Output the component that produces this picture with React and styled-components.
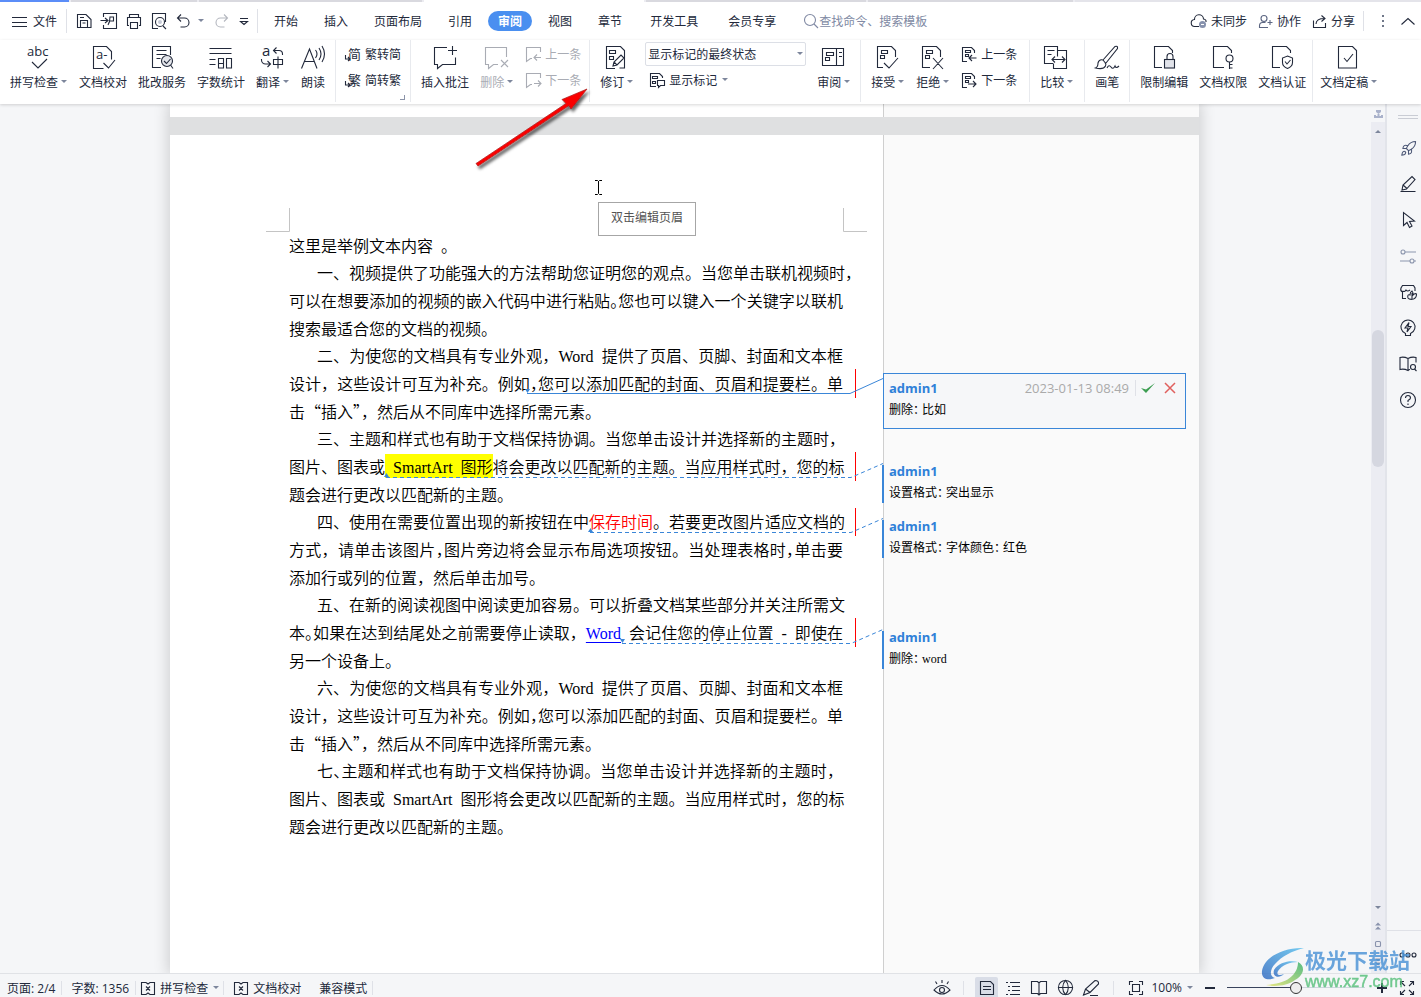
import { useState } from "react";
import styled, { createGlobalStyle } from "styled-components";
import { Globe, Rocket } from "lucide-react";

const GlobalStyle = createGlobalStyle`
  html, body, #root {
    height: 100%;
    margin: 0;
  }
  body {
    overflow: hidden;
    background: #f5f6f8;
    color: #22293b;
    font-family: "Open Sans", "Noto Sans CJK SC", sans-serif;
    font-size: 12px;
  }
  * {
    box-sizing: border-box;
  }
  svg {
    display: block;
    flex: none;
    overflow: visible;
  }
  button, select, input {
    font: inherit;
    color: inherit;
  }
  button {
    padding: 0;
    border: 0;
    background: none;
    white-space: nowrap;
    cursor: pointer;
  }
`;

/* ---------- layout ---------- */

const AppShell = styled.div`
  position: relative;
  display: flex;
  flex-direction: column;
  height: 100vh;
`;

const TabStrip = styled.div`
  display: flex;
  flex: none;
  gap: 2px;
  height: 2px;
  background: #ececf1;
`;

const StripTab = styled.div`
  flex: ${(p) => p.$flex} 1 0;
  background: ${(p) => p.$color};
`;

const MenuBar = styled.header`
  display: flex;
  align-items: center;
  flex: none;
  height: 38px;
  padding: 0 6px 0 12px;
  background: #fff;
`;

const FileButton = styled.button`
  display: flex;
  align-items: center;
  gap: 6px;
`;

const Separator = styled.i`
  width: 1px;
  height: ${(p) => p.$height || 24}px;
  margin: 0 ${(p) => p.$right || 8}px 0 ${(p) => p.$left || 8}px;
  background: #dfe1e7;
`;

const Spacer = styled.i`
  width: ${(p) => p.$width}px;
`;

const QuickTools = styled.div`
  display: flex;
  align-items: center;
  gap: 7px;
`;

const IconButton = styled.button`
  display: flex;
  align-items: center;
  gap: 4px;
  color: ${(p) => (p.$muted ? "#b4b7bf" : "inherit")};
`;

const Tabs = styled.nav`
  display: flex;
  align-items: center;
`;

const Tab = styled.button`
  height: 20px;
  margin: 0 3px;
  padding: 0 ${(p) => (p.$wide ? 12 : 10)}px;
  border-radius: 10px;
  background: ${(p) => (p.$active ? "#4a8ff0" : "none")};
  color: ${(p) => (p.$active ? "#fff" : "inherit")};
  font-weight: ${(p) => (p.$active ? 700 : 400)};
`;

const SearchLabel = styled.label`
  display: flex;
  align-items: center;
  margin-left: 12px;
  color: #8089a3;
`;

const SearchInput = styled.input`
  width: 130px;
  padding: 0;
  border: 0;
  outline: 0;
  background: none;

  &::placeholder {
    color: #8089a3;
    opacity: 1;
  }
`;

const MenuRight = styled.div`
  display: flex;
  align-items: center;
  gap: 11px;
  margin-left: auto;
`;

const Ribbon = styled.section`
  position: relative;
  z-index: 2;
  display: flex;
  flex: none;
  height: 64px;
  background: #fff;
  box-shadow: 0 1px 3px rgba(0, 0, 0, 0.16);
`;

const Group = styled.div`
  position: relative;
  display: flex;
  flex: none;
  gap: 11px;
  height: 62px;
  padding: 0 ${(p) => p.$right || 10}px 0 ${(p) => p.$left || 10}px;
  border-right: ${(p) => (p.$last ? 0 : 1)}px solid #e8eaee;
`;

const BigButton = styled.button`
  display: flex;
  flex-direction: column;
  align-items: center;
  height: 55px;
  padding-top: 5px;
  color: ${(p) => (p.$muted ? "#a9acb4" : "inherit")};

  > svg {
    margin-right: ${(p) => (p.$drop ? 2 : 0)}px;
  }
`;

const ButtonLabel = styled.span`
  display: flex;
  align-items: center;
  gap: 2px;
  height: 26px;
`;

const SmallStack = styled.div`
  display: flex;
  flex-direction: column;
  gap: 2px;
  padding-top: 2px;
`;

const SmallButton = styled.button`
  display: flex;
  align-items: center;
  gap: 4px;
  height: 24px;
  padding-left: ${(p) => p.$indent || 0}px;
  color: ${(p) => (p.$muted ? "#a9acb4" : "inherit")};
`;

const SelectWrap = styled.label`
  position: relative;
  display: flex;
  align-items: center;
  width: 161px;
  height: 24px;

  svg {
    position: absolute;
    right: 2px;
    pointer-events: none;
  }
`;

const Select = styled.select`
  width: 100%;
  height: 24px;
  padding: 0 2px;
  border: 1px solid #dcdfe6;
  border-radius: 2px;
  outline: 0;
  appearance: none;
  background: #fff;
`;

const Launcher = styled.span`
  position: absolute;
  right: 5px;
  bottom: 2px;
  width: 5px;
  height: 5px;
  border: solid #8b93a8;
  border-width: 0 1px 1px 0;
`;

const Workspace = styled.main`
  display: flex;
  flex: 1;
  min-height: 0;
`;

const Canvas = styled.div`
  display: flex;
  flex: 1;
  flex-direction: column;
  align-items: center;
  overflow: hidden;
  padding-right: 2px;
`;

const Pages = styled.div`
  display: flex;
  flex-direction: column;
  flex: 1 0 auto;
  gap: 18px;
  width: 1029px;
  background: #dfe0e1;
  box-shadow: 0 0 14px 2px rgba(0, 0, 0, 0.16);
`;

const Paper = styled.article`
  position: relative;
  display: flex;
  justify-content: flex-end;
  flex: ${(p) => (p.$tail ? "none" : "1 0 auto")};
  height: ${(p) => (p.$tail ? "13px" : "auto")};
  background: #fff;
`;

const PaperBody = styled.div`
  flex: 1;
  padding: 96px 40px 0 119px;
  color: #000;
  font-family: "Noto Sans CJK SC", sans-serif;
  font-size: 16px;
  font-weight: 350;
  line-height: 28px;
`;

const Margin = styled.aside`
  width: 316px;
  padding-top: ${(p) => (p.$tail ? 0 : 238)}px;
  border-left: 1px solid #cfcfcf;
  background: #fafafa;
`;

const Paragraph = styled.p`
  width: 554px;
  margin: 0 0 -1px;
`;

const Line = styled.span`
  display: block;
  height: 28px;
  margin-right: ${(p) => (p.$hang ? -10 : 0)}px;
  padding-left: ${(p) => (p.$first ? 28 : 0)}px;
  text-align: justify;
  text-align-last: ${(p) => (p.$end ? "left" : "justify")};
  white-space: nowrap;
`;

// half-width punctuation
const Half = styled.span`
  font-feature-settings: "halt";
`;

const Latin = styled.span`
  font-family: "Liberation Serif", serif;
  font-weight: 400;
  line-height: 20px;
`;

const Highlight = styled.mark`
  background: #ff0;
  color: inherit;
`;

const RedText = styled.span`
  color: #f00;
`;

const WordLink = styled.a`
  color: #00f;
  font-family: "Liberation Serif", serif;
  font-weight: 400;
  line-height: 20px;
  text-underline-offset: 3px;
`;

const Markup = styled.svg`
  position: absolute;
  top: 0;
  left: 0;
  pointer-events: none;
`;

const HeaderTip = styled.div`
  position: absolute;
  top: 67px;
  left: 428px;
  width: 98px;
  height: 34px;
  border: 1px solid #a6a6a6;
  background: #fff;
  color: #555;
  line-height: 30px;
  text-align: center;
`;

const Revision = styled.section`
  width: 303px;
  height: ${(p) => (p.$active ? 56 : 38)}px;
  margin: ${(p) => p.$gap}px 0 0 ${(p) => (p.$active ? -1 : -2)}px;
  padding: ${(p) => (p.$active ? "8px 9px 0 5px" : "0 0 0 5px")};
  border: ${(p) => (p.$active ? "1px solid #3a86d8" : "0 solid #3a86d8")};
  border-left-width: ${(p) => (p.$active ? 1 : 2)}px;
  background: ${(p) => (p.$active ? "#f6f7f9" : "none")};
`;

const RevisionHead = styled.div`
  display: flex;
  align-items: center;
  height: 12px;
  margin-bottom: 8px;
`;

const Author = styled.b`
  margin-right: auto;
  color: #2f80d8;
  font-size: 13px;
  line-height: 12px;
`;

const RevisionDate = styled.time`
  color: #aaa;
  font-size: 13px;
  line-height: 12px;
`;

const RevisionText = styled.p`
  margin: 0;
  color: #000;
  font-family: "Liberation Serif", "Noto Sans CJK SC", serif;
  line-height: 16px;
`;

const ScrollTrack = styled.div`
  display: flex;
  flex-direction: column;
  align-items: center;
  flex: none;
  width: 16px;
  border-right: 2px solid #e2e4ea;
  background: #ebecf2;
`;

const SplitHandle = styled.div`
  width: 100%;
  height: 18px;
  padding: 6px 2px 0 3px;
  background: #f5f6f8;
`;

const ScrollSpace = styled.div`
  flex: ${(p) => p.$grow} 1 0;
`;

const ScrollThumb = styled.div`
  width: 12px;
  height: 137px;
  border-radius: 6px;
  background: #d5d7e0;
`;

const ScrollButton = styled.button`
  display: flex;
  align-items: center;
  justify-content: center;
  height: 18px;
`;

const Rail = styled.aside`
  display: flex;
  flex-direction: column;
  align-items: center;
  flex: none;
  gap: 18px;
  width: 34px;
  padding-left: 8px;
`;

const Grip = styled.div`
  width: 20px;
  height: 4px;
  margin: 11px 0 2px;
  border: solid #c9ccd4;
  border-width: 1px 0;
`;

const RailButton = styled.button`
  display: flex;
  align-items: center;
  height: 18px;
`;

const RailMore = styled.button`
  display: flex;
  align-items: center;
  justify-content: center;
  width: 34px;
  height: 43px;
  margin: auto 0 0 -8px;
  padding: 6px 0 0 8px;
  border-top: 1px solid #dfe1e7;
`;

const StatusBar = styled.footer`
  display: flex;
  align-items: center;
  flex: none;
  height: 24px;
  padding: 4px 6px 0 7px;
  border-top: 1px solid #e0e2e6;
  background: #f5f6f8;
  white-space: nowrap;
`;

const ViewTools = styled.div`
  display: flex;
  align-items: center;
  margin-left: auto;
`;

const ViewButton = styled.button`
  display: flex;
  align-items: center;
  justify-content: center;
  width: ${(p) => (p.$active ? 23 : 26)}px;
  height: 22px;
  margin-right: ${(p) => (p.$active ? 2 : 0)}px;
  border-radius: 2px 2px 0 0;
  background: ${(p) => (p.$active ? "#d9dde7" : "none")};
`;

const ZoomSlider = styled.input`
  width: 138px;
  height: 14px;
  margin: 0 11px;
  appearance: none;
  background: linear-gradient(#39435c, #39435c) 0 50% / 69px 1px no-repeat,
    linear-gradient(#cdd6dd, #cdd6dd) 0 50% / 100% 1px no-repeat;

  &::-webkit-slider-thumb {
    width: 12px;
    height: 12px;
    border: 1px solid #333;
    border-radius: 50%;
    appearance: none;
    background: #eee;
  }
`;

const RedArrow = styled.svg`
  position: absolute;
  top: 84px;
  left: 468px;
  z-index: 3;
  pointer-events: none;
`;

const Watermark = styled.div`
  position: absolute;
  right: 10px;
  bottom: 5px;
  z-index: 4;
  display: flex;
  gap: 1px;
  opacity: 0.82;
  pointer-events: none;
`;

const WatermarkText = styled.div`
  display: flex;
  flex-direction: column;
  width: 106px;
  color: #4b93d6;
  font-size: 21px;
  font-weight: 700;
  line-height: 24px;
  white-space: nowrap;
`;

const WatermarkUrl = styled.span`
  color: #54bf78;
  font-family: "Liberation Sans", sans-serif;
  font-size: 16px;
  font-weight: 400;
  line-height: 20px;
  -webkit-text-stroke: 0.5px #54bf78;
`;

/* ---------- icons ---------- */

const Icon = ({ size = 24, w, children, ...rest }) => (
    <svg width={w || size} height={size} viewBox={`0 0 ${w || size} ${size}`} fill="none"
        stroke="currentColor" strokeWidth="1.1" aria-hidden="true" {...rest}>
        {children}
    </svg>
);

const Caret = ({ up }) => (
    <svg width="8" height="4" viewBox="0 0 8 4" aria-hidden="true">
        <path d={up ? "M1 4h6L4 1z" : "M1 0h6L4 3z"} fill="#7d869c" />
    </svg>
);

const CommentShape = ({ d }) => <Icon size={16}><path d={`M7 12.500H5.500l-4 3V1.500h14V6${d}`} /></Icon>;

const icons = {
    spell: <Icon><text x="1" y="11" fontSize="13" stroke="none" fill="currentColor">abc</text><path d="M6 17l6 6 9-9" /></Icon>,
    proof: (
        <Icon>
            <path d="M12.500 23.500h-10v-22h13l5 5v8M12.500 18l5 5 6.500-8" />
            <text x="5" y="14" fontSize="13" stroke="none" fill="currentColor">a-</text>
        </Icon>
    ),
    service: (
        <Icon>
            <path d="M11 22.500H2.500v-21h18V10M6.500 5.500h10M6.500 9.500h10M6.500 13.500h4M20.500 20l2.500 3.500" />
            <circle cx="17" cy="16" r="5.500" fill="#e4e6ec" />
            <path d="M14 16l2.500 2.500 4-4.500" />
        </Icon>
    ),
    count: (
        <Icon>
            <path d="M.5 3.500h22M.5 8.500h22M.5 14.500h6M.5 19.500h6M9.500 13.500h5v9.500h-5zM17.500 13.500h5v9.500h-5zM9.500 18.500h5" />
        </Icon>
    ),
    translate: (
        <Icon>
            <text x="2" y="11" fontSize="15" stroke="none" fill="currentColor">a</text>
            <path d="M14 5.500h5a3.500 3.500 0 0 1 3.500 3.500v1M16.500 2.500l-3 3 3 3M1.500 14v1a4 4 0 0 0 4 4H10M7.500 16l3 3-3 3M13.500 14.500h9v5h-9zM18 11.500v12" />
        </Icon>
    ),
    read: (
        <Icon>
            <path d="M.5 23.500L8.500 4l7.500 19.500M3.500 16.500h10M14.500 5q3 4 0 8M18 3q4 6 0 12M21 1q5 8 0 16" />
        </Icon>
    ),
    toSimple: (
        <Icon size={16}><text x="3" y="13" fontSize="13" stroke="none" fill="currentColor">简</text><path d="M.5 9v4h4M3 11l2 2-2 2" /></Icon>
    ),
    toTrad: (
        <Icon size={16}><text x="3" y="13" fontSize="13" stroke="none" fill="currentColor">繁</text><path d="M.5 9v4h4M3 11l2 2-2 2" /></Icon>
    ),
    addNote: <Icon><path d="M14 2.500H1.500v17h3v4l5-4h13v-7M19.500 1v9M15 5.500h9" /></Icon>,
    delNote: <Icon><path d="M14 19.500H9.500l-5 4v-4h-3v-17h21V12M17 15l7 7M24 15l-7 7" /></Icon>,
    prevNote: <CommentShape d="M16 11.500H9M12 8.500l-3 3 3 3" />,
    nextNote: <CommentShape d="M9 11.500h7M13 8.500l3 3-3 3" />,
    revise: (
        <Icon><path d="M11 23.500H2.500v-22h14l4 4v17.500h-5M5.500 5.500h6v3h-6zM5.500 11.500h4v3h-4z" /><path d="M9 21l1-4 7-7 3 3-7 7zM10 17l3 3" /></Icon>
    ),
    showMark: <Icon size={16}><path d="M7 14.500H1.500v-13h9l3 3V6M3.500 4.500h5v2h-5zM3.500 9.500h3v2h-3zM8.500 8.500h7v5h-4l-2 2v-2h-1z" /></Icon>,
    pane: <Icon><path d="M1.500 3.500h21v17h-21zM15.500 3.500v17M5.500 7.500h7v3h-7zM4.500 12.500h4v3h-4zM18 7.500h3M18 11.500h3" /></Icon>,
    accept: <Icon><path d="M8 22.500H2.500v-21h14l4 4V12M6.500 5.500h6v3h-6zM5.500 10.500h4v3h-4zM9 18l5 5 9-10" /></Icon>,
    reject: <Icon><path d="M10 22.500H2.500v-21h14l4 4V12M6.500 5.500h6v3h-6zM5.500 10.500h4v3h-4zM13 13l10 11M23 13L13 24" /></Icon>,
    prevEdit: <Icon size={16}><path d="M6 15.500H1.500v-14h9l3 3V7M4.500 4.500h5v2h-5zM4.500 8.500h3v2h-3zM15.500 12H8M11 9l-3 3 3 3" /></Icon>,
    nextEdit: <Icon size={16}><path d="M6 15.500H1.500v-14h9l3 3V7M4.500 4.500h5v2h-5zM4.500 8.500h3v2h-3zM7 12h8M12 9l3 3-3 3" /></Icon>,
    compare: (
        <Icon w={26}><path d="M10 18.500H1.500v-17h13v10M14.500 5.500h9v18h-13v-5M4.500 5.500h7M4.500 9.500h4M9 14.500h13M12 11.500l-3 3 3 3M19 11.500l3 3-3 3" /></Icon>
    ),
    brush: <Icon><path d="M8 15L20 1.500q3-1 2.500 2L11 18M8 15q-4-1-5 3 0 4-2.500 5 8 2 10-2 1-2-.5-3.500zM12 23q2-4 4-1t4-1q1 3 4 0" /></Icon>,
    lock: <Icon><path d="M10 22.500H2.500v-21h14l4 4V8M15 14v-2.500a3 3 0 0 1 6 0V14" /><rect x="12.500" y="14.500" width="10" height="8.500" fill="#e1e3ea" /></Icon>,
    key: <Icon><path d="M13 22.500H2.500v-21h14l4 4V8M18.500 17v7M18.500 19.500h3M18.500 23h3" /><circle cx="18.500" cy="13.500" r="3.500" /></Icon>,
    shield: <Icon><path d="M10 22.500H2.500v-21h14l4 4V8M17.500 11l5 2v4.500q0 4-5 6-5-2-5-6V13zM15 16.500l2 2.500 3.500-4" /></Icon>,
    final: <Icon><path d="M2.500 1.500h14l4 4v17.500h-18zM8 13l3 3.500 6-7.500" /></Icon>,
    save: <Icon size={18}><path d="M2.500 15.500v-13h8.500l5 5v8zM5.500 15V8.500h7V15M5 5.500h4M7.500 11h3" /></Icon>,
    exportPdf: <Icon size={18}><path d="M3.500 5V1.500h13v15h-13V13M.5 8.500h7M5 6l3 2.500L5 11M8 13q2-3 2-8h3.500v4H9" /></Icon>,
    print: <Icon size={18}><path d="M4.500 5.500v-3h9v3M4 13.500H2.500v-8h13v8H14M5.500 10.500h7v6h-7z" /></Icon>,
    preview: <Icon size={18}><path d="M8 16.500H2.500v-15h13V10M13 14l3 3" /><circle cx="10" cy="10" r="4.500" /><circle cx="10" cy="10" r="2" fill="#c6cad6" stroke="none" /></Icon>,
    undo: <Icon size={18}><path d="M6 2.500L2.500 6 6 9.500M3 6h6.500a4.500 4.500 0 0 1 0 9H5.500" /></Icon>,
    redo: <Icon size={18}><path d="M12 2.500L15.500 6 12 9.500M15 6H8.500a4.500 4.500 0 0 0 0 9h4" /></Icon>,
    proofBox: <Icon size={16}><path d="M6 2.500H1.500v12H6l2-1.500 2 1.500h4.500v-12H10L8 4 6 2.500M6 6.500l4 4M10 6.500l-4 4" /></Icon>,
    cloud: (
        <Icon size={16}><path d="M8 13.500H4a3.500 3.500 0 0 1-.5-7 4.500 4.500 0 0 1 9-.5q3 .5 2.500 3" /><circle cx="11.500" cy="11.500" r="3.500" fill="#8691ad" stroke="none" /><path d="M10 11.500h3" stroke="#fff" /></Icon>
    ),
    people: <Icon size={15} stroke="#5c6682"><circle cx="6" cy="4.500" r="3" /><path d="M10 13.500H1.500V12q0-3.500 3-3.500h3M12 6v5M9.500 8.500h5" /></Icon>,
    share: <Icon size={15}><path d="M1.500 6.500v7h12V9M4 10q0-5.500 8.500-5.500M9.500 1.500l3.500 3-3.500 3" /></Icon>,
};

const railIcons = {
    火箭: <Rocket size={17} strokeWidth={1.5} color="#4b5675" />,
    编辑: <Icon size={18}><path d="M1.500 16.500h15M3 15l1-5 9-8.500 3 3L7.500 14zM4 10l4 3.500" /></Icon>,
    选择: <Icon size={18}><path d="M4.500 1.500v13l3.500-3 2.500 5 2.500-1.500-2.500-4.500 5-.5z" /></Icon>,
    设置: <Icon size={18} stroke="#8c96ad"><circle cx="4" cy="5" r="2" /><path d="M6 5h11M1 14h10M15 14h2" /><circle cx="13" cy="14" r="2" /></Icon>,
    商店: <Icon size={18}><path d="M7 15.500H3.500V9q-2.500-1-1.500-4l1.500-2.500h11L16 5v3M3.500 8q2 1.500 3.500-1 1.500 2 4 0M9 15q-1-4 2-3 0-3 2-4 1.500 2 1 4 2-2 3.500-1 0 4-3 5-4 1-5.500-1zM13 10v6" /></Icon>,
    灵感: <Icon size={18}><path d="M6.500 14.500a7 7 0 1 1 5 0v2h-5zM10 3.500L6 9h3l-1 4 4-5.500H9z" /></Icon>,
    资料: <Icon size={18}><path d="M9 3.500q-4-2-8-1v12q4-1 8 1 1-1 2-1M9 3.500q4-2 8-1v5M9 3.500V15M15.500 14l2 2" /><circle cx="14" cy="12" r="2.500" /></Icon>,
    帮助: <Icon size={18}><circle cx="9" cy="9" r="7.500" /><path d="M6.500 7q0-2.500 2.500-2.500T11.500 7Q11.500 8 9 9.500V11M9 12.500v1.500" /></Icon>,
};

/* ---------- pieces ---------- */

const Big = ({ icon, label, drop, muted }) => (
    <BigButton type="button" $muted={muted} $drop={drop}>
        {icons[icon]}
        <ButtonLabel>{label}{drop && <Caret />}</ButtonLabel>
    </BigButton>
);

const Small = ({ icon, label, drop, muted, indent }) => (
    <SmallButton type="button" $muted={muted} $indent={indent}>
        {icons[icon]}{label}{drop && <Caret />}
    </SmallButton>
);

const tabs = ["开始", "插入", "页面布局", "引用", "审阅", "视图", "章节", "开发工具", "会员专享"];

const revisions = [
    { gap: 0, kind: "删除", value: "比如", date: "2023-01-13 08:49" },
    { gap: 36, kind: "设置格式", value: "突出显示" },
    { gap: 17, kind: "设置格式", value: "字体颜色：红色" },
    { gap: 73, kind: "删除", value: "word" },
];

// 半角标点
const halfColon = (text) => text.split("：").map((part, i) => (
    <span key={i}>{i > 0 && <><Half>：</Half> </>}{part}</span>
));

const DesignParagraph = ({ no }) => (
    <Paragraph>
        <Line $first>{no}、为使您的文档具有专业外观<Half>，</Half>&ensp;<Latin>Word</Latin>&ensp;提供了页眉、页脚、封面和文本框</Line>
        <Line>设计，这些设计可互为补充。例如<Half>，</Half>您可以添加匹配的封面、页眉和提要栏。单</Line>
        <Line $end>击“插入”，然后从不同库中选择所需元素。</Line>
    </Paragraph>
);

function DocumentText() {
    return (
        <PaperBody>
            <Paragraph><Line $end>这里是举例文本内容&ensp;。</Line></Paragraph>
            <Paragraph>
                <Line $first $hang>一、视频提供了功能强大的方法帮助您证明您的观点。当您单击联机视频时，</Line>
                <Line>可以在想要添加的视频的嵌入代码中进行粘贴<Half>。</Half>您也可以键入一个关键字以联机</Line>
                <Line $end>搜索最适合您的文档的视频。</Line>
            </Paragraph>
            <DesignParagraph no="二" />
            <Paragraph>
                <Line $first>三、主题和样式也有助于文档保持协调。当您单击设计并选择新的主题时，</Line>
                <Line>图片、图表或<Highlight>&ensp;<Latin>SmartArt</Latin>&ensp;图形</Highlight>将会更改以匹配新的主题。当应用样式时，您的标</Line>
                <Line $end>题会进行更改以匹配新的主题。</Line>
            </Paragraph>
            <Paragraph>
                <Line $first>四、使用在需要位置出现的新按钮在中<RedText>保存时间</RedText>。若要更改图片适应文档的</Line>
                <Line>方式，请单击该图片<Half>，</Half>图片旁边将会显示布局选项按钮。当处理表格时<Half>，</Half>单击要</Line>
                <Line $end>添加行或列的位置，然后单击加号。</Line>
            </Paragraph>
            <Paragraph>
                <Line $first>五、在新的阅读视图中阅读更加容易。可以折叠文档某些部分并关注所需文</Line>
                <Line>本<Half>。</Half>如果在达到结尾处之前需要停止读取，<WordLink href="#word">Word</WordLink>&ensp;会记住您的停止位置&ensp;<Latin>-</Latin>&ensp;即使在</Line>
                <Line $end>另一个设备上。</Line>
            </Paragraph>
            <DesignParagraph no="六" />
            <Paragraph>
                <Line $first>七<Half>、</Half>主题和样式也有助于文档保持协调。当您单击设计并选择新的主题时，</Line>
                <Line>图片、图表或&ensp;<Latin>SmartArt</Latin>&ensp;图形将会更改以匹配新的主题。当应用样式时，您的标</Line>
                <Line $end>题会进行更改以匹配新的主题。</Line>
            </Paragraph>
        </PaperBody>
    );
}

// 修订连线、页边角标
const RevisionMarkup = () => (
    <Markup width="720" height="560" fill="none" aria-hidden="true">
        <path d="M96 96.500h23.500V73M697 96.500h-23.500V73" stroke="#c4c4c4" />
        <path d="M685.500 234v29M685.500 317v29M685.500 373v28M685.500 483v29" stroke="#f00" />
        <g stroke="#3a86d8">
            <path d="M357 258.500h323l33-15" />
            <path d="M216 342.500h465l32-14M420 397.500h261l32-14M452 508.500h229l32-14" strokeDasharray="4 3" />
        </g>
        <path d="M355 254h5l-2.500 4zM214 342h5l-2.500-4zM418 397h5l-2.500-4zM450 504h5l-2.500 4z" fill="#3a86d8" />
        <path d="M425 45.500h2.500l1 1 1-1h2.500M428.500 46v12M425 59.500h2.500l1-1 1 1h2.500" stroke="#000" />
    </Markup>
);

function App() {
    const [activeTab, setActiveTab] = useState("审阅");
    const [zoom, setZoom] = useState(50);

    return (
        <AppShell>
            <GlobalStyle />
            <TabStrip>
                <StripTab $flex={69} $color="#5b8df8" />
                <StripTab $flex={126} $color="#d9d9df" />
                <StripTab $flex={222} $color="#d9d9df" />
                <StripTab $flex={220} $color="#fff" />
                <StripTab $flex={220} $color="#d9d9df" />
                <StripTab $flex={204} $color="#d9d9df" />
                <StripTab $flex={346} $color="#e4e4ea" />
            </TabStrip>

            <MenuBar>
                <FileButton type="button">
                    <Icon size={15}><path d="M0 3.500h15M0 8.500h15M0 12.500h15" /></Icon>文件
                </FileButton>
                <Separator $left={9} />
                <QuickTools>
                    <IconButton type="button" aria-label="保存">{icons.save}</IconButton>
                    <IconButton type="button" aria-label="输出为PDF">{icons.exportPdf}</IconButton>
                    <IconButton type="button" aria-label="打印">{icons.print}</IconButton>
                    <IconButton type="button" aria-label="打印预览">{icons.preview}</IconButton>
                    <IconButton type="button" aria-label="撤销">{icons.undo}<Caret /></IconButton>
                    <IconButton type="button" aria-label="恢复" $muted>{icons.redo}</IconButton>
                    <IconButton type="button" aria-label="更多">
                        <Icon size={14}><path d="M3 4.500h8M3.500 7.500h7L7 10.500z" /></Icon>
                    </IconButton>
                </QuickTools>
                <Separator $left={6} $right={3} />
                <Tabs>
                    {tabs.map((tab) => (
                        <Tab key={tab} type="button" $active={tab === activeTab}
                            $wide={tab.length === 4 && tab !== "页面布局"} onClick={() => setActiveTab(tab)}>
                            {tab}
                        </Tab>
                    ))}
                </Tabs>
                <SearchLabel>
                    <Icon size={16}><circle cx="7" cy="7" r="5.500" /><path d="M11 11l4 4" /></Icon>
                    <SearchInput aria-label="搜索" placeholder="查找命令、搜索模板" />
                </SearchLabel>
                <MenuRight>
                    <IconButton type="button">{icons.cloud}未同步</IconButton>
                    <IconButton type="button">{icons.people}协作</IconButton>
                    <IconButton type="button">{icons.share}分享</IconButton>
                    <Separator $height={20} $left={-3} $right={1} />
                    <IconButton type="button" aria-label="更多选项">
                        <Icon size={12} w={14}><path d="M7 0v2M7 5v2M7 10v2" strokeWidth="2" stroke="#6f7789" /></Icon>
                    </IconButton>
                    <IconButton type="button" aria-label="收起功能区">
                        <Icon size={14}><path d="M.5 10.500L7 4.500l6.500 6" /></Icon>
                    </IconButton>
                </MenuRight>
            </MenuBar>

            <Ribbon>
                <Group>
                    <Big icon="spell" label="拼写检查" drop />
                    <Big icon="proof" label="文档校对" />
                    <Big icon="service" label="批改服务" />
                    <Big icon="count" label="字数统计" />
                    <Big icon="translate" label="翻译" drop />
                    <Big icon="read" label="朗读" />
                </Group>
                <Group $left={9} $right={9}>
                    <SmallStack>
                        <Small icon="toSimple" label="繁转简" />
                        <Small icon="toTrad" label="简转繁" />
                    </SmallStack>
                    <Launcher />
                </Group>
                <Group $right={8}>
                    <Big icon="addNote" label="插入批注" />
                    <Big icon="delNote" label="删除" drop muted />
                    <SmallStack>
                        <Small icon="prevNote" label="上一条" muted />
                        <Small icon="nextNote" label="下一条" muted />
                    </SmallStack>
                </Group>
                <Group $right={9}>
                    <Big icon="revise" label="修订" drop />
                    <SmallStack>
                        <SelectWrap>
                            <Select aria-label="显示状态">
                                <option>显示标记的最终状态</option>
                            </Select>
                            <Caret />
                        </SelectWrap>
                        <Small icon="showMark" label="显示标记" drop indent={4} />
                    </SmallStack>
                    <Big icon="pane" label="审阅" drop />
                </Group>
                <Group $right={12}>
                    <Big icon="accept" label="接受" drop />
                    <Big icon="reject" label="拒绝" drop />
                    <SmallStack>
                        <Small icon="prevEdit" label="上一条" />
                        <Small icon="nextEdit" label="下一条" />
                    </SmallStack>
                </Group>
                <Group><Big icon="compare" label="比较" drop /></Group>
                <Group><Big icon="brush" label="画笔" /></Group>
                <Group $right={6}>
                    <Big icon="lock" label="限制编辑" />
                    <Big icon="key" label="文档权限" />
                    <Big icon="shield" label="文档认证" />
                </Group>
                <Group $left={7} $last><Big icon="final" label="文档定稿" drop /></Group>
            </Ribbon>

            <Workspace>
                <Canvas>
                    <Pages>
                        <Paper $tail><Margin $tail /></Paper>
                        <Paper>
                            <DocumentText />
                            <Margin>
                                {revisions.map((item, index) => (
                                    <Revision key={index} $gap={item.gap} $active={!!item.date}>
                                        <RevisionHead>
                                            <Author>admin1</Author>
                                            {item.date && (
                                                <>
                                                    <RevisionDate>{item.date}</RevisionDate>
                                                    <Separator $height={16} $left={6} $right={5} />
                                                    <IconButton type="button" aria-label="接受修订">
                                                        <Icon size={14} stroke="none"><path d="M0 7l5 5L14 2 5 8.500z" fill="#3d9e52" /></Icon>
                                                    </IconButton>
                                                    <Spacer $width={9} />
                                                    <IconButton type="button" aria-label="拒绝修订">
                                                        <Icon size={12} stroke="#e0605e"><path d="M1 1l10 10M11 1L1 11" strokeWidth="1.500" /></Icon>
                                                    </IconButton>
                                                </>
                                            )}
                                        </RevisionHead>
                                        <RevisionText>{halfColon(`${item.kind}：${item.value}`)}</RevisionText>
                                    </Revision>
                                ))}
                            </Margin>
                            <RevisionMarkup />
                            <HeaderTip>双击编辑页眉</HeaderTip>
                        </Paper>
                    </Pages>
                </Canvas>

                <ScrollTrack>
                    <SplitHandle>
                        <Icon size={8} w={9} stroke="none"><path d="M2 0h5v2L4.500 4 2 2zM0 8V5h2v1h1.500V4h2v2H7V5h2v3z" fill="#aab2cb" /></Icon>
                    </SplitHandle>
                    <ScrollButton type="button" aria-label="向上滚动"><Caret up /></ScrollButton>
                    <ScrollSpace $grow={190} />
                    <ScrollThumb />
                    <ScrollSpace $grow={432} />
                    <ScrollButton type="button" aria-label="向下滚动"><Caret /></ScrollButton>
                    <ScrollButton type="button" aria-label="上一页">
                        <Icon size={8} stroke="none"><path d="M1 3.500h6l-3-3zM1 7.500h6l-3-3z" fill="#8a93ad" /></Icon>
                    </ScrollButton>
                    <ScrollButton type="button" aria-label="选择浏览对象">
                        <Icon size={8} stroke="#8a93ad"><rect x="1.500" y="1.500" width="5" height="5" rx="1" /></Icon>
                    </ScrollButton>
                    <ScrollButton type="button" aria-label="下一页">
                        <Icon size={8} stroke="none"><path d="M1 .5h6l-3 3zM1 4.500h6l-3 3z" fill="#8a93ad" /></Icon>
                    </ScrollButton>
                    <ScrollSpace $grow={2} />
                </ScrollTrack>

                <Rail>
                    <Grip />
                    {Object.entries(railIcons).map(([name, icon]) => (
                        <RailButton key={name} type="button" aria-label={name}>{icon}</RailButton>
                    ))}
                    <RailMore type="button" aria-label="更多工具">
                        <Icon size={8} w={18}><circle cx="3" cy="4" r="2" /><circle cx="9" cy="4" r="2" /><circle cx="15" cy="4" r="2" /></Icon>
                    </RailMore>
                </Rail>
            </Workspace>

            <StatusBar>
                <span>页面: 2/4</span>
                <Separator $height={14} $left={6} $right={9} />
                <span>字数: 1356</span>
                <Separator $height={14} $left={6} $right={4} />
                <IconButton type="button">{icons.proofBox}拼写检查<Caret /></IconButton>
                <Separator $height={14} $left={3} $right={9} />
                <IconButton type="button">{icons.proofBox}文档校对</IconButton>
                <Spacer $width={18} />
                <span>兼容模式</span>
                <Separator $height={14} $left={5} />
                <ViewTools>
                    <IconButton type="button" aria-label="护眼模式">
                        <Icon size={18}><path d="M1 11q8-9 16 0-8 8-16 0zM9 4V1M4 5L2.500 2.500M14 5l1.500-2.500" /><circle cx="9" cy="11" r="2.500" /></Icon>
                    </IconButton>
                    <Separator $height={14} $left={12} $right={11} />
                    <ViewButton type="button" aria-label="页面视图" $active>
                        <Icon size={16}><path d="M1.500 1.500h10l3 3v10h-13zM4 6.500h8M4 9.500h8" /></Icon>
                    </ViewButton>
                    <ViewButton type="button" aria-label="大纲视图">
                        <Icon size={16}><path d="M1 2.500h2M5 2.500h10M3 6.500h2M7 6.500h8M3 10.500h2M7 10.500h8M1 14.500h2M5 14.500h10" /></Icon>
                    </ViewButton>
                    <ViewButton type="button" aria-label="阅读版式">
                        <Icon size={16}><path d="M8 3L6.500 1.500h-6v12h6L8 15l1.500-1.500h6v-12h-6zV15" /></Icon>
                    </ViewButton>
                    <ViewButton type="button" aria-label="Web版式"><Globe size={17} strokeWidth={1.5} /></ViewButton>
                    <ViewButton type="button" aria-label="写作模式">
                        <Icon size={18}><path d="M1.500 16l2-6L13 1.500q4 0 3.500 3.500L8 13.500zM3.500 10L8 13.500M8 16.500h8" /></Icon>
                    </ViewButton>
                    <Separator $height={14} $left={9} $right={14} />
                    <IconButton type="button" aria-label="适合页面">
                        <Icon size={16}><path d="M1.500 5V1.500H5M11 1.500h3.500V5M14.500 11v3.500H11M5 14.500H1.500V11M4.500 4.500h7v7h-7z" /></Icon>
                    </IconButton>
                    <Spacer $width={7} />
                    <IconButton type="button">100%<Caret /></IconButton>
                    <Spacer $width={10} />
                    <IconButton type="button" aria-label="缩小"><Icon size={12}><path d="M1 6h10" strokeWidth="2" /></Icon></IconButton>
                    <ZoomSlider type="range" aria-label="缩放" value={zoom} onChange={(e) => setZoom(e.target.value)} />
                    <IconButton type="button" aria-label="放大"><Icon size={12}><path d="M1 6h10M6 1v10" strokeWidth="2" /></Icon></IconButton>
                    <Spacer $width={11} />
                    <IconButton type="button" aria-label="全屏">
                        <Icon size={16}><path d="M1.500 5V1.500H5M1.500 1.500L6 6M11 1.500h3.500V5M14.500 1.500L10 6M14.500 11v3.500H11M14.500 14.500L10 10M5 14.500H1.500V11M1.500 14.500L6 10" /></Icon>
                    </IconButton>
                </ViewTools>
            </StatusBar>

            <RedArrow width="130" height="92" aria-hidden="true">
                <defs>
                    <filter id="arrowShadow" x="-20%" y="-20%" width="140%" height="150%">
                        <feDropShadow dx="2" dy="3" stdDeviation="1.500" floodOpacity="0.6" />
                    </filter>
                </defs>
                <path d="M8 79.500L98 19.500 94 15.500 119 5l-16 20-2-3.500L10 82z" fill="#fa0505" stroke="#a81818" strokeWidth=".7" filter="url(#arrowShadow)" />
            </RedArrow>

            <Watermark>
                <svg width="42" height="40" viewBox="0 0 42 40" aria-hidden="true">
                    <defs>
                        <linearGradient id="wmBlue" x1="0" y1="1" x2="1" y2="0">
                            <stop offset="0" stopColor="#2f68c0" />
                            <stop offset="1" stopColor="#58c0ee" />
                        </linearGradient>
                        <linearGradient id="wmGreen" x1="0" y1="1" x2="1" y2="0">
                            <stop offset="0" stopColor="#e3e36a" />
                            <stop offset="1" stopColor="#35b06a" />
                        </linearGradient>
                    </defs>
                    <path d="M42 0C22-1 2 9 0 23c-1 8 6 10 13 7-6-1-5-9 0-14C20 8 30 3 42 0z" fill="url(#wmBlue)" />
                    <path d="M12 22c5-8 16-10 24-8-8 0-16 3-20 9-2 4 1 5 6 3-5 5-12 3-10-4z" fill="url(#wmBlue)" />
                    <path d="M36 14c8 4 6 13-3 18-8 6-20 7-29 5 11-1 20-3 26-9 5-5 6-10 6-14z" fill="url(#wmGreen)" />
                </svg>
                <WatermarkText>
                    极光下载站
                    <WatermarkUrl>www.xz7.com</WatermarkUrl>
                </WatermarkText>
            </Watermark>
        </AppShell>
    );
}

export default App;
